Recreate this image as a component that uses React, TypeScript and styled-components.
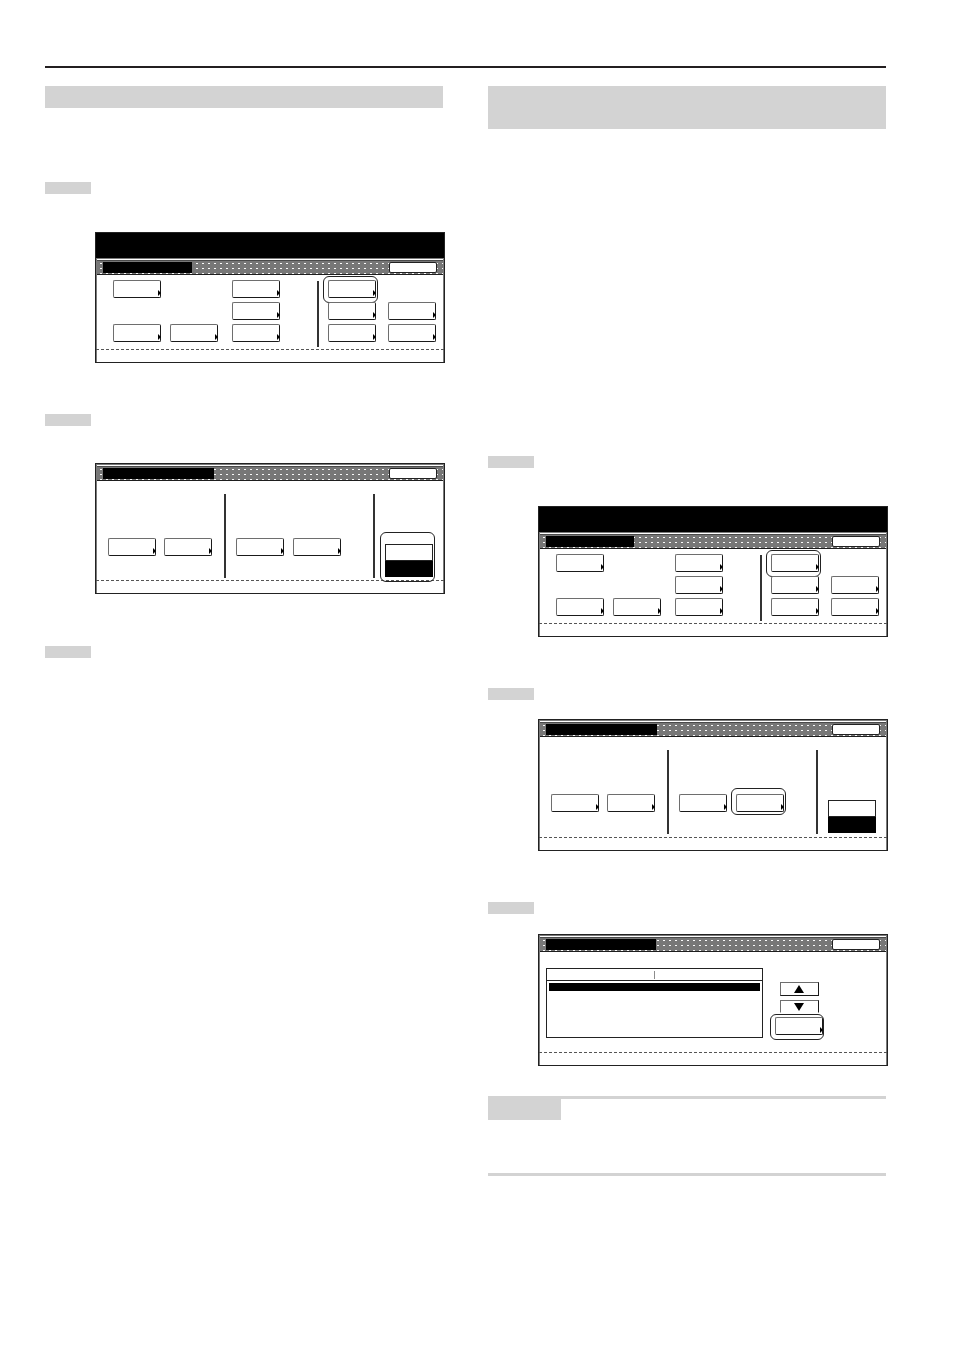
import React from 'react'
import styled, { createGlobalStyle } from 'styled-components'

const Global = createGlobalStyle`
  html, body { margin: 0; padding: 0; background: #fff; }
  body { font-family: "Liberation Sans", Arial, sans-serif; }
`

const Page = styled.div`
  width: 954px;
  height: 1350px;
  box-sizing: border-box;
  padding: 66px 0 0 45px;
`

const TopRule = styled.div`
  width: 841px;
  height: 2px;
  background: #231f20;
`

const Columns = styled.div`
  display: grid;
  grid-template-columns: 398px 398px;
  column-gap: 45px;
  margin-top: 18px;
  align-items: start;
`

const Column = styled.div`
  display: flex;
  flex-direction: column;
`

const SectionBar = styled.div<{ $h: number }>`
  height: ${p => p.$h}px;
  background: #d3d3d3;
`

const StepTag = styled.div<{ $top: number }>`
  width: 46px;
  height: 12px;
  margin-top: ${p => p.$top}px;
  background: #d3d3d3;
`

/* ---- panel drawings ---- */

const Frame = styled.div<{ $top: number }>`
  margin: ${p => p.$top}px 0 0 50px;
  width: 350px;
  box-sizing: border-box;
  border: 1px solid #222;
  background: #fff;
  display: flex;
  flex-direction: column;
`

const Banner = styled.div`
  height: 25px;
  background: #000;
`

const Panel = styled.div`
  display: flex;
  flex-direction: column;
  padding-top: 2px;
  box-shadow: inset 1px 0 0 #7a7a7a, inset -1px 0 0 #7a7a7a, inset 0 1px 0 #7a7a7a;
`

const TitleBar = styled.div`
  height: 13px;
  margin: 0 1px;
  padding: 0 6px;
  display: flex;
  align-items: center;
  justify-content: space-between;
  background-color: #777;
  background-image: radial-gradient(circle, #fafafa 0 0.6px, transparent 1px);
  background-size: 6px 5px;
  background-position: 1px 0;
  border-top: 1px solid #4a4a4a;
  border-bottom: 1px solid #1e1e1e;
`

const TitleLabel = styled.div<{ $w: number }>`
  width: ${p => p.$w}px;
  height: 11px;
  background: #000;
`

const CloseKey = styled.div`
  width: 48px;
  height: 11px;
  box-sizing: border-box;
  background: #fff;
  border: 1px solid #222;
  border-radius: 2px;
`

const Body = styled.div<{ $cols: string; $rows: string; $h: number; $pad?: number }>`
  display: grid;
  grid-template-columns: ${p => p.$cols};
  grid-template-rows: ${p => p.$rows};
  row-gap: 4px;
  height: ${p => p.$h}px;
  box-sizing: border-box;
  padding-top: ${p => p.$pad ?? 0}px;
  align-items: start;
`

const StatusBar = styled.div`
  height: 12px;
  border-top: 1px dashed #555;
`

const Key = styled.div<{ $col: number; $row: string; $top?: number }>`
  grid-column: ${p => p.$col};
  grid-row: ${p => p.$row};
  margin-top: ${p => p.$top ?? 0}px;
  position: relative;
  width: 48px;
  height: 18px;
  box-sizing: border-box;
  background: #fff;
  border: 1px solid #6e6e6e;
  border-right-color: #1a1a1a;
  border-bottom-color: #1a1a1a;
  border-radius: 2px;
  &::after {
    content: '';
    position: absolute;
    right: -1px;
    bottom: 1px;
    border-left: 3px solid #000;
    border-top: 3.5px solid transparent;
    border-bottom: 3.5px solid transparent;
  }
`

const Ring = styled.span<{ $inset: string }>`
  position: absolute;
  inset: ${p => p.$inset};
  border: 1.5px solid #222;
  border-radius: 6px;
  pointer-events: none;
`

const VLine = styled.div<{ $col: number; $row: string; $top: number; $h: number }>`
  grid-column: ${p => p.$col};
  grid-row: ${p => p.$row};
  margin-top: ${p => p.$top}px;
  width: 2px;
  height: ${p => p.$h}px;
  background: #333;
`

const ModeStack = styled.div<{ $col: number; $top: number }>`
  grid-column: ${p => p.$col};
  grid-row: 1;
  margin-top: ${p => p.$top}px;
  position: relative;
  width: 48px;
  display: flex;
  flex-direction: column;
`

const ModeOn = styled.div`
  height: 17px;
  box-sizing: border-box;
  background: #fff;
  border: 1px solid #222;
`

const ModeOff = styled.div`
  height: 16px;
  background: #000;
`

const ListBox = styled.div`
  grid-column: 2;
  grid-row: 1;
  margin-top: 16px;
  height: 70px;
  box-sizing: border-box;
  border: 1px solid #222;
  display: flex;
  flex-direction: column;
`

const ListHead = styled.div`
  height: 11px;
  border-bottom: 1px solid #222;
  display: flex;
`

const HeadCell = styled.div<{ $w?: number }>`
  width: ${p => (p.$w ? `${p.$w}px` : 'auto')};
  flex: ${p => (p.$w ? 'none' : 1)};
  & + & {
    border-left: 1px solid #8c8c8c;
    margin: 2px 0 1px;
  }
`

const SelectedRow = styled.div`
  margin: 2px 2px 0;
  height: 8px;
  background: #000;
`

const SideKeys = styled.div`
  grid-column: 4;
  grid-row: 1;
  margin-top: 30px;
  display: flex;
  flex-direction: column;
  align-items: center;
`

const ArrowKey = styled.div<{ $h: number; $down?: boolean }>`
  width: 39px;
  height: ${p => p.$h}px;
  box-sizing: border-box;
  background: #fff;
  border: 1px solid #6e6e6e;
  border-right-color: #1a1a1a;
  border-bottom-color: ${p => (p.$down ? 'transparent' : '#1a1a1a')};
  display: flex;
  align-items: center;
  justify-content: center;
  &::before {
    content: '';
    border-left: 5px solid transparent;
    border-right: 5px solid transparent;
    ${p => (p.$down ? 'border-top: 8px solid #000;' : 'border-bottom: 8px solid #000;')}
  }
`

const SideGap = styled.div<{ $h: number }>`
  height: ${p => p.$h}px;
`

const SoloKey = styled(Key)`
  margin-top: 0;
`

const NoteBox = styled.div`
  margin-top: 30px;
  height: 74px;
  border-top: 3px solid #d3d3d3;
  border-bottom: 3px solid #d3d3d3;
`

const NoteTag = styled.div`
  width: 73px;
  height: 21px;
  background: #d3d3d3;
`

/* ---- screens ---- */

type KeyDef = { col: number; row: number; ring?: string }

const menuKeys: KeyDef[] = [
  { col: 2, row: 1 },
  { col: 6, row: 1 },
  { col: 10, row: 1, ring: '-5px -3px -6px -6px' },
  { col: 6, row: 2 },
  { col: 10, row: 2 },
  { col: 12, row: 2 },
  { col: 2, row: 3 },
  { col: 4, row: 3 },
  { col: 6, row: 3 },
  { col: 10, row: 3 },
  { col: 12, row: 3 },
]

function Title({ label }: { label: number }) {
  return (
    <TitleBar>
      <TitleLabel $w={label} />
      <CloseKey />
    </TitleBar>
  )
}

function MenuScreen({ top, label }: { top: number; label: number }) {
  return (
    <Frame $top={top}>
      <Banner />
      <Panel>
        <Title label={label} />
        <Body
          $cols="17px 48px 9px 48px 14px 48px 37px 2px 9px 48px 12px 48px"
          $rows="18px 18px 18px"
          $h={74}
          $pad={5}
        >
          <VLine $col={8} $row="1 / span 3" $top={1} $h={66} />
          {menuKeys.map((k, i) => (
            <Key key={i} $col={k.col} $row={String(k.row)}>
              {k.ring && <Ring $inset={k.ring} />}
            </Key>
          ))}
        </Body>
        <StatusBar />
      </Panel>
    </Frame>
  )
}

function ModeScreen({ top, ringKey }: { top: number; ringKey?: boolean }) {
  const cols = [2, 4, 8, 10]
  return (
    <Frame $top={top}>
      <Panel>
        <Title label={111} />
        <Body
          $cols="12px 48px 8px 48px 12px 2px 10px 48px 9px 48px 32px 2px 10px 48px"
          $rows="1fr"
          $h={ringKey ? 100 : 99}
        >
          <VLine $col={6} $row="1" $top={13} $h={84} />
          <VLine $col={12} $row="1" $top={13} $h={84} />
          {cols.map((c, i) => (
            <Key key={c} $col={c} $row="1" $top={57}>
              {ringKey && i === 3 && <Ring $inset="-7px -3px -4px -6px" />}
            </Key>
          ))}
          <ModeStack $col={14} $top={63}>
            <ModeOn />
            <ModeOff />
            {!ringKey && <Ring $inset="-12px -2px -5px -5px" />}
          </ModeStack>
        </Body>
        <StatusBar />
      </Panel>
    </Frame>
  )
}

function ListScreen({ top }: { top: number }) {
  return (
    <Frame $top={top}>
      <Panel>
        <Title label={110} />
        <Body $cols="7px 217px 12px 48px" $rows="1fr" $h={100}>
          <ListBox>
            <ListHead>
              <HeadCell $w={107} />
              <HeadCell />
            </ListHead>
            <SelectedRow />
          </ListBox>
          <SideKeys>
            <ArrowKey $h={14} />
            <SideGap $h={4} />
            <ArrowKey $h={13} $down />
            <SideGap $h={4} />
            <SoloKey $col={1} $row="auto">
              <Ring $inset="-4px -2px -6px -6px" />
            </SoloKey>
          </SideKeys>
        </Body>
        <StatusBar />
      </Panel>
    </Frame>
  )
}

export default function App() {
  return (
    <>
      <Global />
      <Page>
        <TopRule />
        <Columns>
          <Column>
            <SectionBar $h={22} />
            <StepTag $top={74} />
            <MenuScreen top={38} label={89} />
            <StepTag $top={51} />
            <ModeScreen top={37} />
            <StepTag $top={52} />
          </Column>
          <Column>
            <SectionBar $h={43} />
            <StepTag $top={327} />
            <MenuScreen top={38} label={88} />
            <StepTag $top={51} />
            <ModeScreen top={19} ringKey />
            <StepTag $top={51} />
            <ListScreen top={20} />
            <NoteBox>
              <NoteTag />
            </NoteBox>
          </Column>
        </Columns>
      </Page>
    </>
  )
}
